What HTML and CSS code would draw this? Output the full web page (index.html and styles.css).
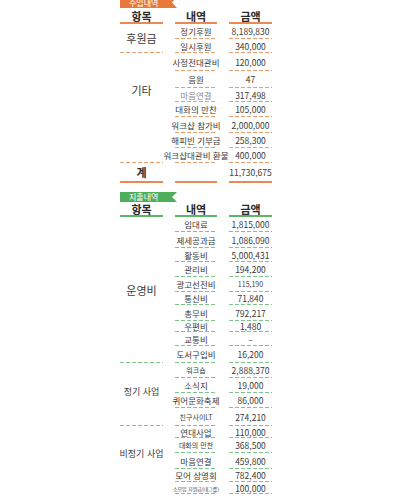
FILE: index.html
```html
<!DOCTYPE html>
<html lang="ko">
<head>
<meta charset="utf-8">
<link rel="stylesheet" href="styles.css">
</head>
<body>
<div class="page">
  <section class="sec income">
    <div class="tag">수입내역</div>
    <div class="grid grid-income">
      <div class="h c1">항목</div><div class="h c2">내역</div><div class="h c3">금액</div>

      <div class="c1 big span2 d">후원금</div><div class="c2 d">정기후원</div><div class="c3 d">8,189,830</div>
      <div class="c2 d">일시후원</div><div class="c3 d">340,000</div>

      <div class="c1 big span7 d gita">기타</div><div class="c2 d">사정전대관비</div><div class="c3 d">120,000</div>
      <div class="c2 d">음원</div><div class="c3 d">47</div>
      <div class="c2 d muted">마음연결</div><div class="c3 d">317,498</div>
      <div class="c2 d">대화의 만찬</div><div class="c3 d">105,000</div>
      <div class="c2 d">워크샵 참가비</div><div class="c3 d">2,000,000</div>
      <div class="c2 d">해피빈 기부금</div><div class="c3 d">258,300</div>
      <div class="c2 d">워크샵대관비 환불</div><div class="c3 d">400,000</div>

      <div class="c1 total s">계</div><div class="c2 s"></div><div class="c3 s">11,730,675</div>
    </div>
  </section>

  <section class="sec expense">
    <div class="tag">지출내역</div>
    <div class="grid grid-expense">
      <div class="h c1">항목</div><div class="h c2">내역</div><div class="h c3">금액</div>

      <div class="c1 big span10 d">운영비</div><div class="c2 d">임대료</div><div class="c3 d">1,815,000</div>
      <div class="c2 d">제세공과금</div><div class="c3 d">1,086,090</div>
      <div class="c2 d">활동비</div><div class="c3 d">5,000,431</div>
      <div class="c2 d">관리비</div><div class="c3 d">194,200</div>
      <div class="c2 d">광고선전비</div><div class="c3 d small">115,190</div>
      <div class="c2 d">통신비</div><div class="c3 d">71,840</div>
      <div class="c2 d">총무비</div><div class="c3 d">792,217</div>
      <div class="c2 d">우편비</div><div class="c3 d">1,480</div>
      <div class="c2 d">교통비</div><div class="c3 d">–</div>
      <div class="c2 d">도서구입비</div><div class="c3 d">16,200</div>

      <div class="c1 mid span4 d regular">정기 사업</div><div class="c2 d small">워크숍</div><div class="c3 d">2,888,370</div>
      <div class="c2 d">소식지</div><div class="c3 d">19,000</div>
      <div class="c2 d">퀴어문화축제</div><div class="c3 d">86,000</div>
      <div class="c2 d small">친구사이LT</div><div class="c3 d">274,210</div>

      <div class="c1 mid span6 d irregular">비정기 사업</div><div class="c2 d">연대사업</div><div class="c3 d">110,000</div>
      <div class="c2 d small">대화의 만찬</div><div class="c3 d">368,500</div>
      <div class="c2 d">마음연결</div><div class="c3 d">459,800</div>
      <div class="c2 d">모어 상영회</div><div class="c3 d">782,400</div>
      <div class="c2 d tiny">소모임 지원금(내그룹)</div><div class="c3 d">100,000</div>
      <div class="c2 d"></div><div class="c3 d"></div>
    </div>
  </section>
</div>
</body>
</html>
```

FILE: styles.css
```css
* { box-sizing: border-box; }

html, body {
  margin: 0;
  padding: 0;
  background: #ffffff;
}

body {
  font-family: "Noto Sans CJK KR", "Noto Sans", sans-serif;
  color: #3a3a3a;
  overflow: hidden;
}

.page {
  padding-left: 118px;
}

.income {
  --main: #e8783c;
  --line: #e98a55;
  --dash: #e4a070;
}

.expense {
  --main: #4fae5c;
  --line: #5cb869;
  --dash: #7fc48a;
  margin-top: 9px;
}

.tag {
  width: 57px;
  height: 11px;
  margin-left: 2px;
  background: var(--main);
  color: #ffffff;
  font-size: 8px;
  line-height: 11px;
  padding-left: 9px;
  clip-path: polygon(0 0, 100% 0, calc(100% - 5px) 50%, 100% 100%, 0 100%);
  white-space: nowrap;
}

.income .tag {
  margin-top: -3px;
}

.expense .tag {
  height: 10px;
  line-height: 10px;
}

.grid {
  display: grid;
  grid-template-columns: 43px 42px 43px;
  column-gap: 12px;
  margin-left: 2px;
}

.grid-income {
  grid-template-rows: 16px 15px 14px 18px 17px 14px 15px 16px 15px 15px 20px;
}

.grid-expense {
  grid-template-rows: 15px 15px 16px 14px 15px 15px 13px 16px 11px 14px 17px 15px 15px 15px 18px 12px 15px 16px 13px 12px 15px;
}

.grid > div {
  display: flex;
  align-items: center;
  justify-content: center;
  white-space: nowrap;
  font-size: 8.5px;
  line-height: 1;
}

.c1 { grid-column: 1; }
.c2 { grid-column: 2; }
.c3 { grid-column: 3; }

.span2 { grid-row: span 2; }
.span4 { grid-row: span 4; }
.span6 { grid-row: span 6; }
.span7 { grid-row: span 7; }
.span10 { grid-row: span 10; }

.grid > .h {
  font-size: 11px;
  font-weight: 700;
  color: #2a2a2a;
  padding-top: 2px;
  border-bottom: 2px solid var(--line);
}

.d {
  background-image: linear-gradient(to right, var(--dash) 0 4px, transparent 4px 6px);
  background-size: 6px 1px;
  background-repeat: repeat-x;
  background-position: left bottom;
}

.s {
  border-bottom: 2px solid var(--line);
}

.grid > .big {
  font-size: 11px;
}

.grid > .mid {
  font-size: 9px;
}

.grid > .total {
  font-size: 11px;
  font-weight: 700;
  color: #2a2a2a;
}

.grid > .gita {
  padding-bottom: 36px;
}

.grid > .regular {
  padding-bottom: 6px;
}

.grid > .irregular {
  padding-bottom: 28px;
}

.grid > .muted {
  color: #8a8a8a;
}

.grid > .small {
  font-size: 7px;
}

.grid > .tiny {
  font-size: 5px;
}
```
